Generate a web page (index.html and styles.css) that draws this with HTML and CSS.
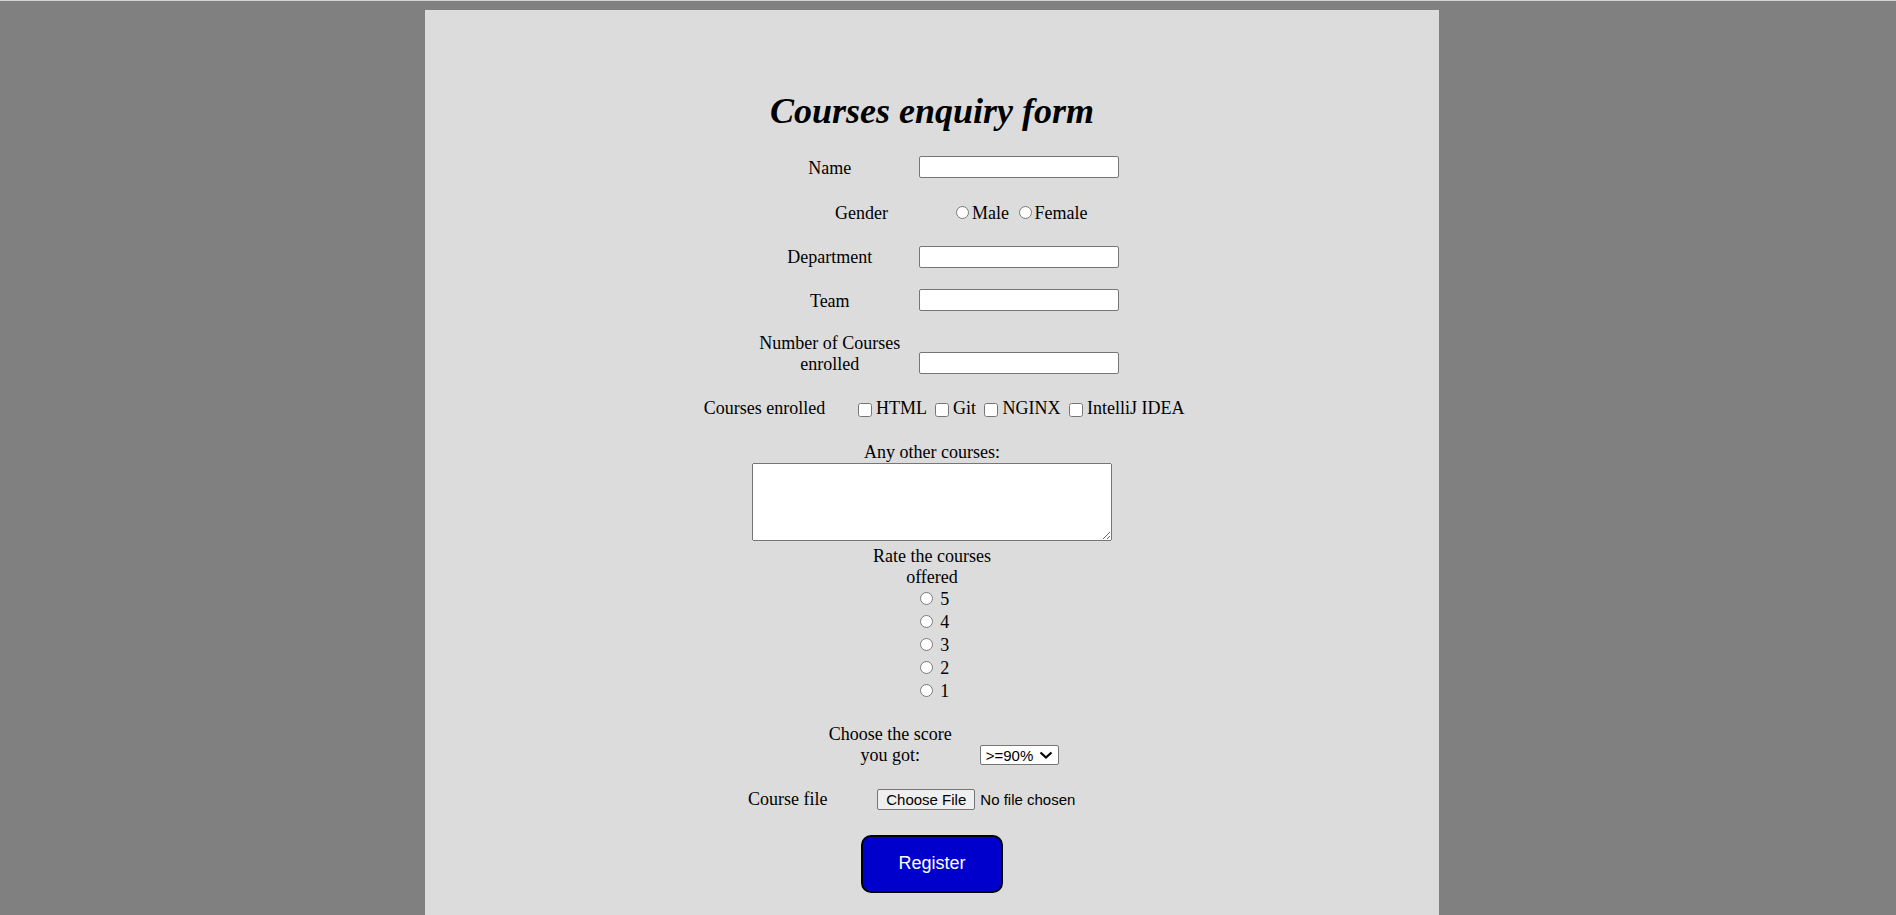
FILE: index.html
```html
<!DOCTYPE html>
<html lang="en">
<head>
<meta charset="utf-8">
<title>Courses enquiry form</title>
<link rel="stylesheet" href="styles.css">
</head>
<body>
<div class="page">
  <h1 class="title">Courses enquiry form</h1>
  <form class="form">
    <div class="row"><label class="lbl" for="name">Name</label> <input class="field" type="text" id="name"></div>
    <div class="row row-gender"><span class="lbl">Gender</span> <input class="radio" type="radio" name="gender" id="male"><label for="male">Male</label> <input class="radio" type="radio" name="gender" id="female"><label for="female">Female</label></div>
    <div class="row"><label class="lbl" for="dept">Department</label> <input class="field" type="text" id="dept"></div>
    <div class="row row-team"><label class="lbl" for="team">Team</label> <input class="field" type="text" id="team"></div>
    <div class="row row-number"><label class="lbl" for="num">Number of Courses enrolled</label> <input class="field" type="text" id="num"></div>
    <div class="row row-courses"><span class="lbl">Courses enrolled</span> <input class="check" type="checkbox" id="c1"><label for="c1">HTML</label> <input class="check" type="checkbox" id="c2"><label for="c2">Git</label> <input class="check" type="checkbox" id="c3"><label for="c3">NGINX</label> <input class="check" type="checkbox" id="c4"><label for="c4">IntelliJ IDEA</label></div>
    <div class="row row-other">
      <label for="other">Any other courses:</label><br><textarea class="other" id="other"></textarea><br>
      <span class="lbl">Rate the courses offered</span>
      <div class="options">
        <input class="radio" type="radio" name="rate" id="r5"> <label for="r5">5</label><br>
        <input class="radio" type="radio" name="rate" id="r4"> <label for="r4">4</label><br>
        <input class="radio" type="radio" name="rate" id="r3"> <label for="r3">3</label><br>
        <input class="radio" type="radio" name="rate" id="r2"> <label for="r2">2</label><br>
        <input class="radio" type="radio" name="rate" id="r1"> <label for="r1">1</label>
      </div>
    </div>
    <div class="row row-score"><label class="lbl" for="score">Choose the score you got:</label> <select class="score" id="score"><option>&gt;=90%</option><option>80-89%</option><option>70-79%</option><option>&lt;70%</option></select></div>
    <div class="row row-file"><label class="lbl" for="file">Course file</label> <input class="file" type="file" id="file"></div>
    <div class="row row-submit"><button class="register" type="submit">Register</button></div>
  </form>
</div>
</body>
</html>
```

FILE: styles.css
```css
html {
  background: #808080;
  border-top: 1px solid #d4d4d4;
}

body {
  margin: 0;
  padding-top: 9px;
  font-family: "Liberation Serif", "Times New Roman", serif;
  font-size: 18px;
  color: #000;
}

.page {
  width: 1014px;
  margin-left: 425px;
  background: #dcdcdc;
  padding: 56px 0 140px;
  text-align: center;
}

.title {
  font-size: 36px;
  font-style: italic;
  font-weight: bold;
  margin: 24px 0;
}

.form {
  margin: 0;
}

.row {
  margin: 22px 0 0;
}

.row-gender {
  padding-top: 2px;
}

.row-team {
  margin-top: 21px;
}

.row-number {
  margin-top: 21px;
}

.row-courses {
  margin-top: 23px;
}

.row-other {
  margin-top: 23px;
}

.row-score {
  margin-top: 21px;
}

.row-file {
  margin-top: 23px;
}

.row-submit {
  margin-top: 25px;
}

.lbl {
  display: inline-block;
  width: 150px;
  margin: 0 10px;
  text-align: center;
}

.field {
  box-sizing: border-box;
  width: 200px;
  height: 22px;
  padding: 3px 2px 1px;
  border: 1px solid #767676;
  border-radius: 2px;
  background: #fff;
  font-family: "Liberation Sans", Arial, sans-serif;
  font-size: 15px;
}

.radio {
  width: 13px;
  height: 13px;
  margin: 3px 3px 0 5px;
}

.check {
  width: 14px;
  height: 14px;
  margin: 3px 4px 1px 4px;
  vertical-align: -3px;
}

.other {
  box-sizing: border-box;
  width: 360px;
  height: 78px;
  margin: 0;
  vertical-align: baseline;
}

.options {
  line-height: 23px;
}

.score {
  box-sizing: border-box;
  width: 79px;
  height: 20px;
  padding: 0 0 0 5px;
  border: 1px solid #767676;
  border-radius: 2px;
  appearance: none;
  -webkit-appearance: none;
  background: #fff url("data:image/svg+xml,%3Csvg xmlns='http://www.w3.org/2000/svg' width='14' height='8' viewBox='0 0 14 8'%3E%3Cpath d='M1.5 1.5 L7 6.5 L12.5 1.5' fill='none' stroke='%23000' stroke-width='2.2'/%3E%3C/svg%3E") no-repeat right 5px center;
  color: #000;
  font-family: "Liberation Sans", Arial, sans-serif;
  font-size: 15px;
}

.file {
  width: 284px;
  font-family: "Liberation Sans", Arial, sans-serif;
  font-size: 15px;
}

.file::file-selector-button {
  font: inherit;
  padding: 1px 8px;
  margin-right: 5px;
  border: 1px solid #767676;
  border-radius: 2px;
  background: #efefef;
  color: #000;
}

.register {
  box-sizing: border-box;
  width: 142px;
  height: 58px;
  background: #0000cd;
  color: #fff;
  border: 2px solid #000;
  border-radius: 10px;
  font-family: "Liberation Sans", Arial, sans-serif;
  font-size: 18px;
}
```
